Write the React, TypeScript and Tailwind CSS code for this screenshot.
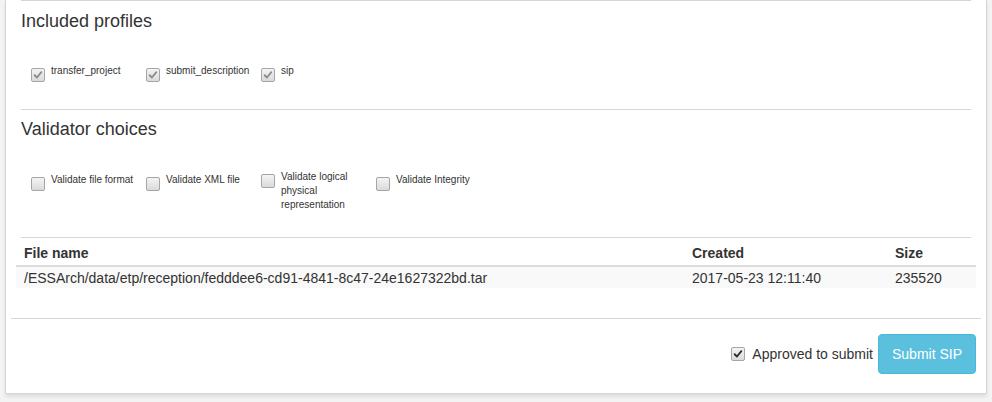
import React from "react";

const font = { fontFamily: '"Liberation Sans", Arial, Helvetica, sans-serif' };

function Box({ checked, dark }: { checked?: boolean; dark?: boolean }) {
  return (
    <span className="relative inline-flex h-[14px] w-[14px] shrink-0 items-center justify-center rounded-[2px] border border-[#a6a6a6] bg-gradient-to-b from-[#f4f4f4] to-[#dadada]">
      {checked && (
        <svg viewBox="0 0 12 12" className="h-[10px] w-[10px]">
          <path
            d="M2 6.3 L4.7 9 L10 2.6"
            fill="none"
            stroke={dark ? "#2b2b2b" : "#8c8c8c"}
            strokeWidth="2.2"
            strokeLinecap="round"
            strokeLinejoin="round"
          />
        </svg>
      )}
    </span>
  );
}

function Choice({ label, checked, top }: { label: string; checked?: boolean; top?: string }) {
  return (
    <div className={`flex w-[115px] items-start pl-[10px] ${top ?? ""}`}>
      <span className="mt-[4px] flex">
        <Box checked={checked} />
      </span>
      <span className="ml-[6px] w-[85px] text-[10px] leading-[14px] text-[#333]">{label}</span>
    </div>
  );
}

function Rule() {
  return <div className="h-px bg-[#d6d6d6]" />;
}

export default function App() {
  return (
    <div style={font} className="h-[402px] w-[992px] overflow-hidden bg-[#f3f3f3] px-[5px]">
      <div className="h-[394px] border-x border-b border-[#d4d4d4] bg-white px-[5px] shadow-[0_3px_3px_rgba(0,0,0,0.08)]">
        <div className="px-[10px]">
          <Rule />
          <h4 className="mt-[10px] text-[18px] leading-[20px] text-[#333]">Included profiles</h4>
          <div className="mt-[33px] flex">
            <Choice label="transfer_project" checked />
            <Choice label="submit_description" checked />
            <Choice label="sip" checked />
          </div>
          <div className="mt-[27px]">
            <Rule />
          </div>
          <h4 className="mt-[9px] text-[18px] leading-[20px] text-[#333]">Validator choices</h4>
          <div className="mt-[31px] flex items-start">
            <Choice label="Validate file format" top="mt-[3px]" />
            <Choice label="Validate XML file" top="mt-[3px]" />
            <Choice label="Validate logical physical representation" />
            <Choice label="Validate Integrity" top="mt-[3px]" />
          </div>
          <div className="mt-[25px]">
            <Rule />
          </div>
          <div className="-mx-[5px] text-[14px] leading-[20px] text-[#333]">
            <div className="flex border-b-2 border-[#ddd] font-bold">
              <div className="w-[668px] px-[8px] pb-[2px] pt-[5px]">File name</div>
              <div className="w-[203px] px-[8px] pb-[2px] pt-[5px]">Created</div>
              <div className="flex-1 px-[8px] pb-[2px] pt-[5px]">Size</div>
            </div>
            <div className="flex h-[21px] bg-[#f9f9f9]">
              <div className="w-[668px] px-[8px] pt-px">/ESSArch/data/etp/reception/fedddee6-cd91-4841-8c47-24e1627322bd.tar</div>
              <div className="w-[203px] px-[8px] pt-px">2017-05-23 12:11:40</div>
              <div className="flex-1 px-[8px] pt-px">235520</div>
            </div>
          </div>
        </div>
        <div className="mt-[30px]">
          <Rule />
        </div>
        <div className="mt-[15px] flex items-center justify-end pr-[5px]">
          <label className="flex items-center text-[14px] text-[#333]">
            <Box checked dark />
            <span className="ml-[7px]">Approved to submit</span>
          </label>
          <button className="ml-[5px] h-[40px] rounded-[4px] border border-[#46b8da] bg-[#5bc0de] px-[13px] text-[14px] text-white">
            Submit SIP
          </button>
        </div>
      </div>
    </div>
  );
}
